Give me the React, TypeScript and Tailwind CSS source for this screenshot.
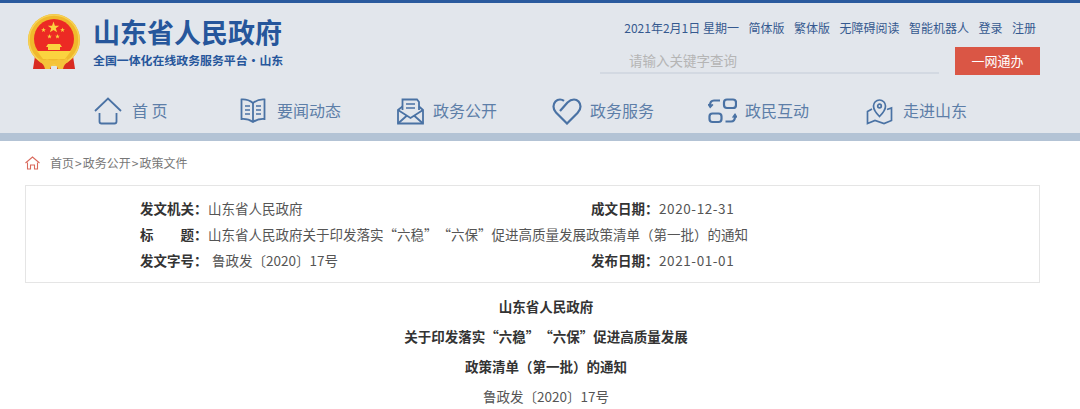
import React, { ReactNode } from "react";

const stroke = "#4a72a4";

const HomeIcon = () => (
  <svg width="28" height="28" viewBox="0 0 28 28" fill="none" stroke={stroke} strokeWidth="1.8">
    <path d="M1 14L14 1.5L27 14" />
    <path d="M5.5 16V24.5Q5.5 26.5 7.5 26.5H20.5Q22.5 26.5 22.5 24.5V16" />
  </svg>
);

const BookIcon = () => (
  <svg width="26" height="26" viewBox="0 0 26 26" fill="none" stroke={stroke} strokeWidth="1.8">
    <path d="M13 5Q8 1 1.5 1.5V21Q8 20.5 13 24Q18 20.5 24.5 21V1.5Q18 1 13 5Z" />
    <path d="M13 5V24" />
    <path d="M5 8H10M5 12H10M5 16H10M16 8H21M16 12H21M16 16H21" strokeWidth="1.5" />
  </svg>
);

const MailIcon = () => (
  <svg width="27" height="27" viewBox="0 0 27 27" fill="none" stroke={stroke} strokeWidth="1.8">
    <path d="M5.5 12V1.5H20L22 4V12" />
    <path d="M9 6H18M9 10H18" strokeWidth="1.4" />
    <path d="M5.5 8.5L1 12V25.5H26V12L22 8.5" />
    <path d="M1 12L13.5 20L26 12M1 25.5L10 17.5M26 25.5L17 17.5" />
  </svg>
);

const HeartIcon = () => (
  <svg width="30" height="27" viewBox="0 0 30 27" fill="none" stroke={stroke} strokeWidth="2.2">
    <path d="M8 13L15.5 4.5C18 2 20 1.5 22 1.5C25.5 1.5 28.5 4.5 28.5 8.5C28.5 11 27.5 13 25.5 15L15 25.5L4 14.5C2.5 13 1.5 11 1.5 8.5C1.5 4.5 4.5 1.5 8 1.5C9.5 1.5 11 2 12 2.8" />
  </svg>
);

const SwapIcon = () => (
  <svg width="29" height="26" viewBox="0 0 29 26" fill="none" stroke={stroke} strokeWidth="2.2">
    <rect x="16" y="1.5" width="12" height="8.5" rx="3" />
    <rect x="1.5" y="15.5" width="12" height="8.5" rx="3" />
    <path d="M12 2.5H6Q2 2.5 2 7.5" />
    <path d="M0 6L2.2 9.5L5 6.5" fill={stroke} strokeWidth="1.2" />
    <path d="M17.5 23.5H23Q27 23.5 27 18.5" />
    <path d="M24.5 19.5L27 16L29 19.5" fill={stroke} strokeWidth="1.2" />
  </svg>
);

const PinIcon = () => (
  <svg width="27" height="27" viewBox="0 0 27 27" fill="none" stroke={stroke} strokeWidth="1.7">
    <path d="M13.5 18.5C9.5 14.5 7.5 11.5 7.5 8A6 6 0 0 1 19.5 8C19.5 11.5 17.5 14.5 13.5 18.5Z" />
    <circle cx="13.5" cy="8" r="1.8" />
    <path d="M6 11L1.5 13.5V25.5L9 22.5L18 25.5L25.5 22.5V10L21 11.5" />
  </svg>
);

const starPoints = "0,-10 2.4,-3.1 9.5,-3.1 3.8,1.2 5.9,8.1 0,4 -5.9,8.1 -3.8,1.2 -9.5,-3.1 -2.4,-3.1";

const Emblem = () => (
  <svg width="54" height="56" viewBox="0 0 54 56">
    <path d="M8 42L6 55H24V48Z" fill="#d92b22" />
    <path d="M46 42L48 55H30V48Z" fill="#d92b22" />
    <circle cx="27" cy="26" r="26" fill="#f0b92c" />
    <circle cx="27" cy="26" r="25" fill="none" stroke="#f7d254" strokeWidth="1.5" />
    <circle cx="27" cy="25" r="20" fill="#ec2a24" />
    <polygon points={starPoints} fill="#fbd33f" transform="translate(26.5 13.5) scale(0.6)" />
    <polygon points={starPoints} fill="#fbd33f" transform="translate(16.5 16) scale(0.25)" />
    <polygon points={starPoints} fill="#fbd33f" transform="translate(35.5 16) scale(0.25)" />
    <polygon points={starPoints} fill="#fbd33f" transform="translate(22.5 22.5) scale(0.25)" />
    <polygon points={starPoints} fill="#fbd33f" transform="translate(30.5 22.5) scale(0.25)" />
    <path d="M21 30H33L35 33H19Z" fill="#fbd33f" />
    <rect x="21" y="33" width="12" height="3" fill="#fbd33f" />
    <path d="M10 37H44L38 45H16Z" fill="#fbd33f" />
    <path d="M12 44Q16 48 20 45Q26 48 32 45Q36 48 40 44L41 48Q37 50 36 55H31Q29 50 27 50Q25 50 23 55H18Q17 50 13 48Z" fill="#f5c33a" />
  </svg>
);

const navItems: { label: string; icon: ReactNode; className: string; gap: string }[] = [
  { label: "首 页", icon: <HomeIcon />, className: "w-[146px]", gap: "gap-[10px]" },
  { label: "要闻动态", icon: <BookIcon />, className: "w-[157px]", gap: "gap-[11px]" },
  { label: "政务公开", icon: <MailIcon />, className: "w-[155px]", gap: "gap-[9px]" },
  { label: "政务服务", icon: <HeartIcon />, className: "w-[156px]", gap: "gap-[8px]" },
  { label: "政民互动", icon: <SwapIcon />, className: "w-[158px]", gap: "gap-[8px]" },
  { label: "走进山东", icon: <PinIcon />, className: "", gap: "gap-[10px]" },
];

const topLinks = ["简体版", "繁体版", "无障碍阅读", "智能机器人", "登录", "注册"];

const Row = ({ label, value, right, rightValue, valueClass }: { label: string; value: string; right?: string; rightValue?: string; valueClass?: string }) => (
  <div className="flex h-[26px] items-center whitespace-nowrap">
    <div className="flex w-[451px] shrink-0 items-center">
      <span className="w-[68px] shrink-0 font-bold text-[#333]">{label}</span>
      <span className={valueClass}>{value}</span>
    </div>
    {right && (
      <>
        <span className="w-[68px] shrink-0 font-bold text-[#333]">{right}</span>
        <span className="tracking-[0.6px]">{rightValue}</span>
      </>
    )}
  </div>
);

export default function App() {
  return (
    <div className="h-[409px] w-[1080px] overflow-hidden bg-white font-['Noto_Sans_CJK_SC','Liberation_Sans',sans-serif] text-[#555] [text-spacing-trim:space-all]">
      <header className="h-[141px] border-t-[3px] border-b-[8px] border-t-[#2a5a9e] border-b-[#b3c3d5] bg-[#e2e6ec]">
        <div className="flex h-[86px]">
          <div className="ml-[27px] mt-[11px]">
            <Emblem />
          </div>
          <div className="ml-[12px] mt-[10px]">
            <div className="text-[27px] leading-[38px] font-bold text-[#26569b]">山东省人民政府</div>
            <div className="mt-[1px] text-[11.9px] leading-[16px] font-bold text-[#26569b]">全国一体化在线政务服务平台·山东</div>
          </div>
          <div className="ml-auto mr-[40px] flex w-[440px] flex-col items-end">
            <div className="mr-[4px] mt-[16px] flex h-[18px] items-center gap-[9.5px] text-[12px] text-[#35598f]">
              <span>2021年2月1日 星期一</span>
              {topLinks.map((link) => (
                <span key={link}>{link}</span>
              ))}
            </div>
            <div className="mt-[10px] flex items-start gap-[16px]">
              <div className="h-[27px] w-[339px] border-b-2 border-[#d3d9e2] pl-[29px] text-[13.5px] leading-[26px] text-[#b5b5b5]">请输入关键字查询</div>
              <button className="h-[28px] w-[85px] bg-[#da5645] text-[13px] text-white">一网通办</button>
            </div>
          </div>
        </div>
        <nav className="ml-[94px] flex h-[44px] items-center text-[16px] text-[#5d7ea8]">
          {navItems.map((item) => (
            <div key={item.label} className={`flex shrink-0 items-center ${item.className} ${item.gap}`}>
              {item.icon}
              <span className="mb-[2px] whitespace-pre">{item.label}</span>
            </div>
          ))}
        </nav>
      </header>
      <div className="ml-[25px] mt-[14px] flex h-[16px] items-center text-[12px] text-[#777]">
        <svg width="15" height="14" viewBox="0 0 15 14" fill="none" stroke="#d9695c" strokeWidth="1.1">
          <path d="M0.5 7L7.5 1L14.5 7" />
          <path d="M2.5 6.5V13H5.5V9H9.5V13H12.5V6.5" />
        </svg>
        <span className="ml-[10px]">
          首页<span className="px-px">&gt;</span>政务公开<span className="px-px">&gt;</span>政策文件
        </span>
      </div>
      <section className="mx-[25px] mt-[14px] h-[98px] w-[1015px] border border-[#e5e5e5] pl-[114px] pt-[9px] text-[13.5px]">
        <Row label="发文机关：" value="山东省人民政府" right="成文日期：" rightValue="2020-12-31" />
        <Row label="标&emsp;&emsp;题：" value="山东省人民政府关于印发落实“六稳”“六保”促进高质量发展政策清单（第一批）的通知" />
        <Row label="发文字号：" value="鲁政发〔2020〕17号" valueClass="ml-[4px]" right="发布日期：" rightValue="2021-01-01" />
      </section>
      <article className="mt-[8px] pl-[12px] text-center text-[13.5px] leading-[30px]">
        <p className="font-bold text-[#333]">山东省人民政府</p>
        <p className="font-bold text-[#333]">关于印发落实“六稳”“六保”促进高质量发展</p>
        <p className="font-bold text-[#333]">政策清单（第一批）的通知</p>
        <p>鲁政发〔2020〕17号</p>
      </article>
    </div>
  );
}
